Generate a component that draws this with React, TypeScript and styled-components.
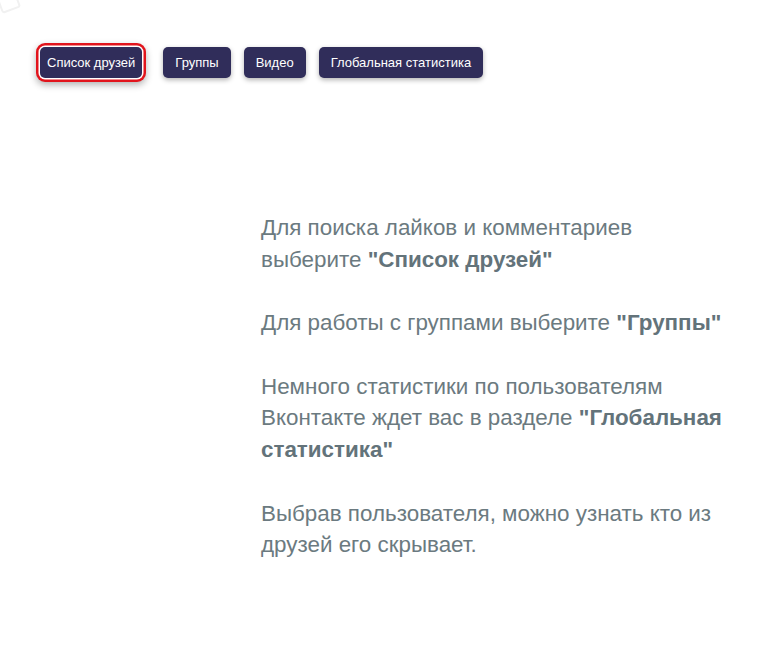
import React from "react";
import styled, { createGlobalStyle } from "styled-components";

const GlobalStyle = createGlobalStyle`
  body {
    margin: 0;
    background: #ffffff;
    font-family: "Liberation Sans", Arial, sans-serif;
  }
`;

const Page = styled.div`
  position: relative;
  width: 768px;
  min-height: 650px;
`;

const CornerMark = styled.svg`
  position: absolute;
  top: -6px;
  left: -4px;
`;

const Nav = styled.nav`
  display: flex;
  align-items: center;
  gap: 13px;
  padding: 47px 0 0 40px;
`;

const NavButton = styled.button<{ $active?: boolean }>`
  font-family: "Liberation Sans", Arial, sans-serif;
  font-size: 13px;
  line-height: 15px;
  color: #ffffff;
  background-color: #302d5a;
  border: none;
  border-radius: 5px;
  padding: ${(p) => (p.$active ? "8px 7px" : "8px 12px")};
  cursor: pointer;
  box-shadow: ${(p) =>
    p.$active
      ? "0 0 0 1.5px #ffffff, 0 0 0 4px #e2141c, 0 3px 7px 4px rgba(0, 0, 0, 0.3)"
      : "0 2px 5px rgba(0, 0, 0, 0.3)"};
  margin-right: ${(p) => (p.$active ? "8px" : "0")};
`;

const Content = styled.section`
  padding: 134px 0 0 261px;
  width: 465px;
`;

const Paragraph = styled.p`
  margin: 0 0 32px;
  font-family: "Liberation Sans", Arial, sans-serif;
  font-size: 22.4px;
  line-height: 31.6px;
  color: #6b7a80;

  b {
    color: #63737a;
  }
`;

const tabs = ["Список друзей", "Группы", "Видео", "Глобальная статистика"];

export default function App() {
  return (
    <Page>
      <GlobalStyle />
      <CornerMark width="30" height="26" viewBox="0 0 30 26">
        <rect
          x="4"
          y="2"
          width="18"
          height="14"
          rx="2"
          fill="none"
          stroke="#f1f1f1"
          strokeWidth="2"
          transform="rotate(-20 13 9)"
        />
      </CornerMark>
      <Nav>
        {tabs.map((t, i) => (
          <NavButton key={t} $active={i === 0}>
            {t}
          </NavButton>
        ))}
      </Nav>
      <Content>
        <Paragraph>
          Для поиска лайков и комментариев выберите <b>"Список друзей"</b>
        </Paragraph>
        <Paragraph>
          Для работы с группами выберите <b>"Группы"</b>
        </Paragraph>
        <Paragraph>
          Немного статистики по пользователям Вконтакте ждет вас в разделе{" "}
          <b>"Глобальная статистика"</b>
        </Paragraph>
        <Paragraph>
          Выбрав пользователя, можно узнать кто из друзей его скрывает.
        </Paragraph>
      </Content>
    </Page>
  );
}
